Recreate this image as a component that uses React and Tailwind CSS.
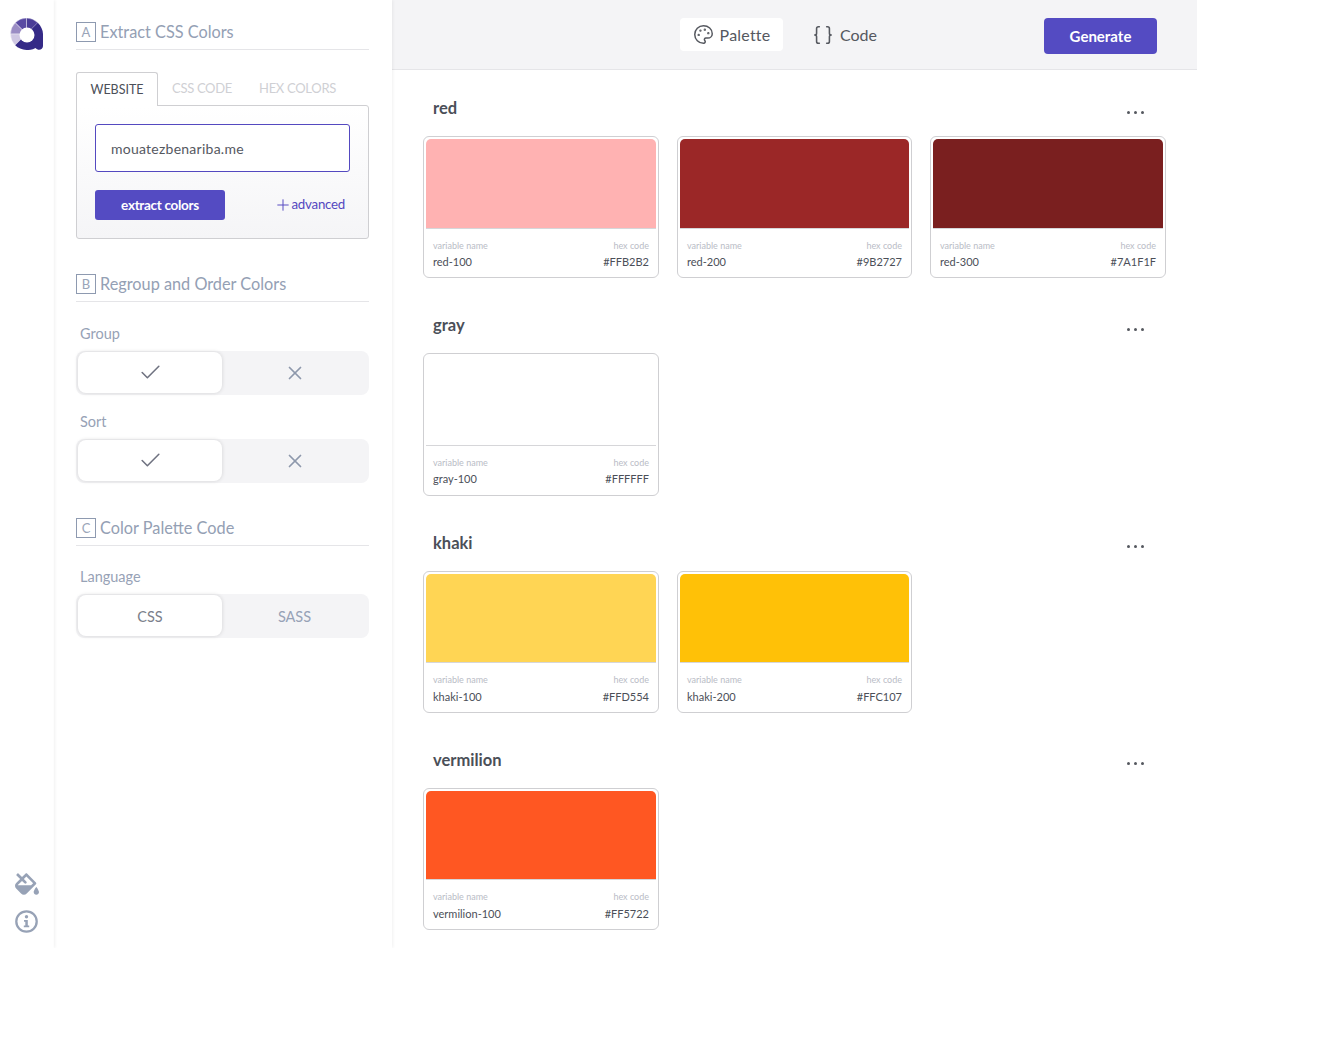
import { Palette, Braces, Check, X, Plus } from 'lucide-react'
import { FaFillDrip } from 'react-icons/fa'

const groups = [
    { name: 'red', colors: [['red-100', '#FFB2B2', 'bg-[#FFB2B2]'], ['red-200', '#9B2727', 'bg-[#9B2727]'], ['red-300', '#7A1F1F', 'bg-[#7A1F1F]']] },
    { name: 'gray', colors: [['gray-100', '#FFFFFF', 'bg-[#FFFFFF]']] },
    { name: 'khaki', colors: [['khaki-100', '#FFD554', 'bg-[#FFD554]'], ['khaki-200', '#FFC107', 'bg-[#FFC107]']] },
    { name: 'vermilion', colors: [['vermilion-100', '#FF5722', 'bg-[#FF5722]']] },
]

const Logo = () => (
    <svg width="34" height="33" viewBox="0 0 34 33" className="block">
        <path d="M16.500 16 L5.200 4.700 A16 16 0 0 1 16.500 0 Z" fill="#5a4ba3" stroke="#fff" strokeWidth="0.4" />
        <path d="M16.500 16 L16.500 0 A16 16 0 0 1 27.800 4.700 Z" fill="#4a3c97" stroke="#fff" strokeWidth="0.4" />
        <path d="M16.500 16 L0.500 16 A16 16 0 0 1 5.200 4.700 Z" fill="#9a8cc4" stroke="#fff" strokeWidth="0.4" />
        <path d="M16.500 16 L5.200 27.300 A16 16 0 0 1 0.500 16 Z" fill="#cfc7e3" stroke="#fff" strokeWidth="0.4" />
        <path d="M16.500 16 L27.800 4.700 C31 8 33 12 33 16 L33 28 C33 32 28 33 25.500 30 C22 32 19 32 16.500 32 C12 32 8 30 5.200 27.300 Z" fill="#352a87" />
        <circle cx="17" cy="17" r="7.500" fill="#fff" />
    </svg>
)

const InfoIcon = () => (
    <svg width="23" height="23" viewBox="0 0 23 23" fill="none" className="block">
        <circle cx="11.500" cy="11.500" r="10.200" stroke="currentColor" strokeWidth="2.300" />
        <circle cx="11.500" cy="6.800" r="1.700" fill="currentColor" />
        <path d="M9 10 H12.800 V15.600 H14.200 V17.300 H8.800 V15.600 H10.300 V11.700 H9 Z" fill="currentColor" />
    </svg>
)

const SectionTitle = ({ letter, children }) => (
    <div className="flex items-center h-[28px] border-b border-[#e5e5e8]">
        <span className="w-[20px] h-[20px] mb-[7px] border border-[#8e9ab0] text-[#9aa5b8] text-[13px] leading-[18px] text-center shrink-0">{letter}</span>
        <span className="ml-[4px] mb-[7px] text-[#94a0b4] text-[16.300px] leading-[20px]">{children}</span>
    </div>
)

const Toggle = ({ on, off, onClass, offClass }) => (
    <div className="flex h-[44px] bg-[#f4f4f6] rounded-[8px] text-[14.500px]">
        <div className={`w-[144px] h-[41px] mt-px ml-[2px] bg-white rounded-[8px] shadow-[0_0_4px_rgba(0,0,0,0.14)] flex items-center justify-center ${onClass}`}>{on}</div>
        <div className={`flex-1 flex items-center justify-center pr-[2px] ${offClass}`}>{off}</div>
    </div>
)

const ColorCard = ({ name, hex, swatch }) => (
    <div className="h-[142.300px] border border-[#cfcfd2] rounded-[6px] p-[2px] bg-white">
        <div className={`h-[89.500px] rounded-t-[5px] border-b border-[#d6d6d9] ${swatch}`} />
        <div className="flex justify-between px-[7px] pt-[11px]">
            <div>
                <div className="text-[9px] leading-[12px] text-[#b9bcc6]">variable name</div>
                <div className="text-[11px] leading-[14px] mt-[3.500px] text-[#4b4f58]">{name}</div>
            </div>
            <div className="text-right">
                <div className="text-[9px] leading-[12px] text-[#b9bcc6]">hex code</div>
                <div className="text-[11px] leading-[14px] mt-[3.500px] text-[#4b4f58]">{hex}</div>
            </div>
        </div>
    </div>
)

export default function App() {
    return (
        <div className="w-[1197px] h-[948px] flex bg-white font-['Lato','Liberation_Sans',sans-serif]">
            {/* Icon rail */}
            <div className="w-[54px] shrink-0 flex flex-col items-center justify-between pt-[18px] pb-[15px] shadow-[1px_0_3px_rgba(0,0,0,0.06)] z-10 pr-px">
                <Logo />
                <div className="flex flex-col items-center gap-[15px] text-[#97a2b6]">
                    <FaFillDrip className="w-[24px] h-[22px]" />
                    <InfoIcon />
                </div>
            </div>

            {/* Sidebar */}
            <div className="w-[338px] shrink-0 pt-[22px] pl-[22px] pr-[23px] shadow-[1px_0_3px_rgba(0,0,0,0.06)] z-10">
                <SectionTitle letter="A">Extract CSS Colors</SectionTitle>

                <div className="mt-[22px] flex items-end h-[34px] relative z-10">
                    <div className="w-[82px] h-[34px] border border-b-0 border-[#cfcfd2] rounded-t-[3px] bg-white text-[12.500px] leading-[33px] text-center text-[#4b4f58]">WEBSITE</div>
                    <div className="ml-[14px] h-[33px] text-[13px] leading-[31px] tracking-[-0.3px] text-[#cfd0d4]">CSS CODE</div>
                    <div className="ml-[27px] h-[33px] text-[13px] leading-[31px] tracking-[-0.3px] text-[#cfd0d4]">HEX COLORS</div>
                </div>
                <div className="-mt-px h-[134px] border border-[#cfcfd2] rounded-b-[3px] rounded-tr-[3px] bg-gradient-to-b from-white to-[#f5f5f7] px-[18px] pt-[18px]">
                    <div className="h-[48px] border border-[#5449c0] rounded-[3px] bg-white pl-[15px] text-[14px] leading-[47px] tracking-[0.25px] text-[#55585f]">mouatezbenariba.me</div>
                    <div className="mt-[18px] flex items-center justify-between">
                        <button className="w-[130px] h-[30px] bg-[#544BC2] rounded-[3px] text-white text-[13.500px] font-bold tracking-[-0.3px]">extract colors</button>
                        <div className="flex items-center mr-[5px] text-[#5449c0] text-[13.300px] tracking-[-0.25px]">
                            <Plus className="w-[18px] h-[18px]" strokeWidth={1.3} />
                            advanced
                        </div>
                    </div>
                </div>

                <div className="mt-[35px]">
                    <SectionTitle letter="B">Regroup and Order Colors</SectionTitle>
                </div>
                <div className="mt-[23px] ml-[4px] text-[14.500px] leading-[18px] text-[#97a2b6]">Group</div>
                <div className="mt-[8px]">
                    <Toggle on={<Check className="w-[25px] h-[25px]" strokeWidth={1.5} />} off={<X className="w-[22px] h-[22px]" strokeWidth={1.9} />} onClass="text-[#6f7280]" offClass="text-[#8e98ac]" />
                </div>
                <div className="mt-[18px] ml-[4px] text-[14.500px] leading-[18px] text-[#97a2b6]">Sort</div>
                <div className="mt-[8px]">
                    <Toggle on={<Check className="w-[25px] h-[25px]" strokeWidth={1.5} />} off={<X className="w-[22px] h-[22px]" strokeWidth={1.9} />} onClass="text-[#6f7280]" offClass="text-[#8e98ac]" />
                </div>

                <div className="mt-[35px]">
                    <SectionTitle letter="C">Color Palette Code</SectionTitle>
                </div>
                <div className="mt-[22px] ml-[4px] text-[14.500px] leading-[18px] text-[#97a2b6]">Language</div>
                <div className="mt-[8px]">
                    <Toggle on="CSS" off="SASS" onClass="text-[#7b7f8b] pt-[2px]" offClass="text-[#97a2b6] pt-[2px]" />
                </div>
            </div>

            {/* Main */}
            <div className="flex-1 min-w-0">
                <div className="relative h-[70px] bg-[#f4f4f6] border-b border-[#e5e5e8] flex items-start pt-[18px] pl-[288px]">
                    <div className="w-[103px] h-[33px] bg-white rounded-[4px] flex items-center justify-center text-[#55585f]">
                        <Palette className="w-[21px] h-[21px] mr-[6px]" strokeWidth={1.7} />
                        <span className="text-[16px] tracking-[0.2px]">Palette</span>
                    </div>
                    <div className="ml-[29px] h-[33px] flex items-center text-[#55585f]">
                        <Braces className="w-[22px] h-[22px] mr-[6px]" strokeWidth={1.7} />
                        <span className="text-[16px]">Code</span>
                    </div>
                    <button className="ml-auto mr-[40px] w-[113px] h-[36px] bg-[#544BC2] rounded-[4px] text-white text-[15px] font-bold">Generate</button>
                </div>

                <div className="pl-[31px] pr-[31px] pt-[28px]">
                    {groups.map((group) => (
                        <div key={group.name} className="h-[217.330px]">
                            <div className="flex items-center justify-between pl-[10px] pr-[22px] h-[21px]">
                                <span className="text-[16.500px] font-bold text-[#4b4f58]">{group.name}</span>
                                <span className="flex gap-[4px] mt-[7px]">
                                    <i className="block w-[3px] h-[3px] rounded-full bg-[#55585f]" />
                                    <i className="block w-[3px] h-[3px] rounded-full bg-[#55585f]" />
                                    <i className="block w-[3px] h-[3px] rounded-full bg-[#55585f]" />
                                </span>
                            </div>
                            <div className="mt-[17px] grid grid-cols-[236px_235px_236px] gap-x-[18px]">
                                {group.colors.map(([name, hex, swatch]) => (
                                    <ColorCard key={name} name={name} hex={hex} swatch={swatch} />
                                ))}
                            </div>
                        </div>
                    ))}
                </div>
            </div>
        </div>
    )
}
